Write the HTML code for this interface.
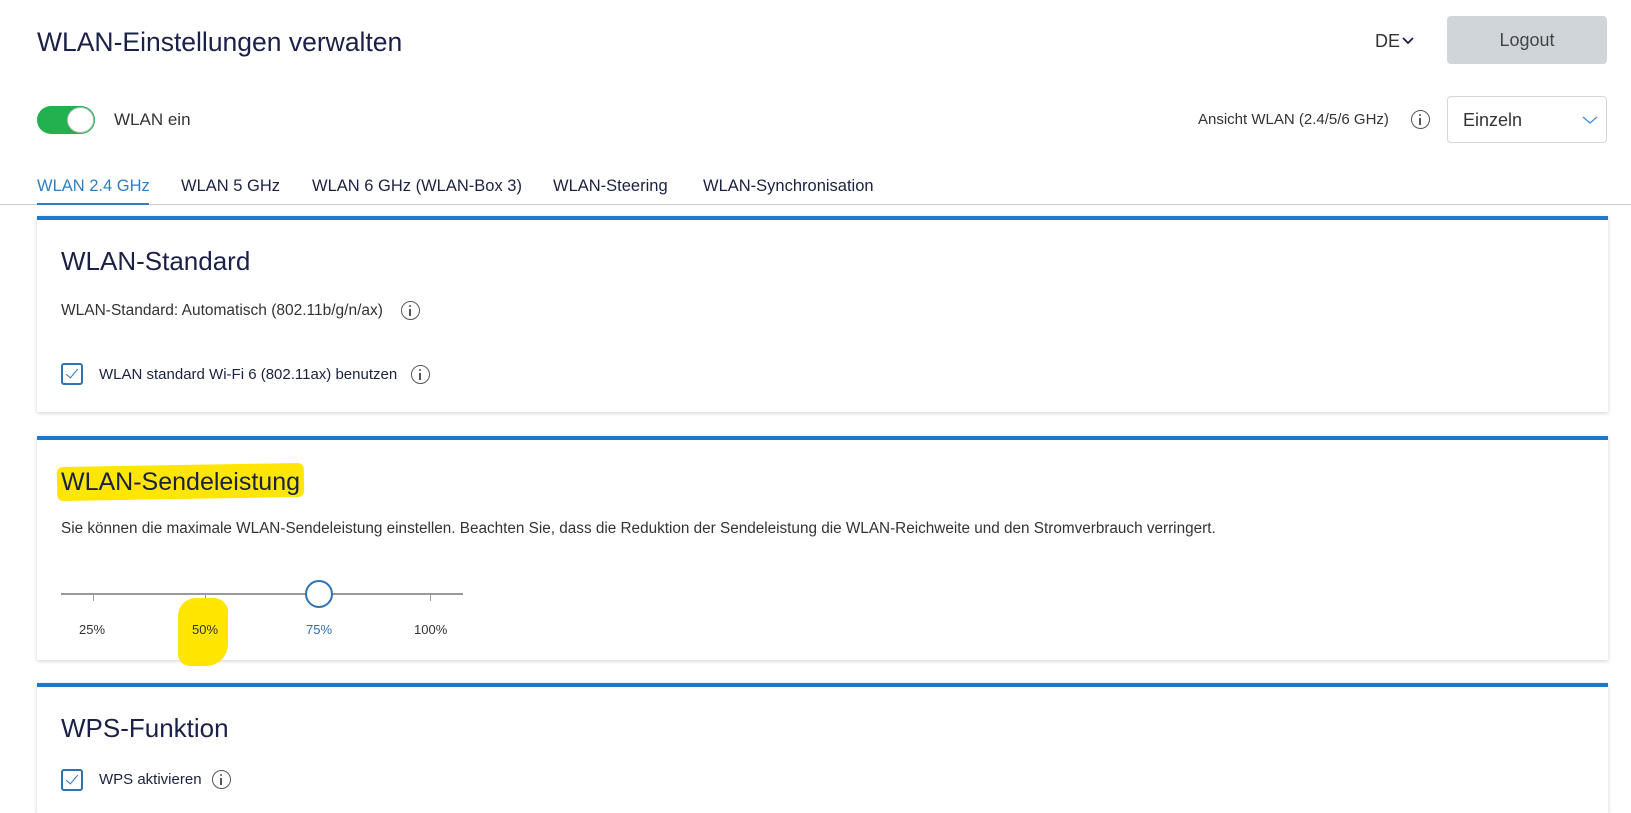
<!DOCTYPE html>
<html><head><meta charset="utf-8"><style>
*{margin:0;padding:0;box-sizing:border-box}
body{width:1631px;height:793px;overflow:hidden;background:#fff;font-family:"Liberation Sans",sans-serif;color:#1b2140;position:relative}
.a{position:absolute;white-space:nowrap}
.card{position:absolute;left:37px;width:1571px;background:#fff;border-top:4px solid #1f77c9;box-shadow:0 1px 4px rgba(0,0,0,.18)}
.info{position:absolute;width:19px;height:19px;border:1.6px solid #555;border-radius:50%}
.info:before{content:"";position:absolute;left:7px;top:3px;width:2.4px;height:2.4px;background:#555;border-radius:50%}
.info:after{content:"";position:absolute;left:7.2px;top:7px;width:2px;height:7px;background:#555}
.cb{position:absolute;width:22px;height:22px;border:2px solid #2f72b5;border-radius:3px}
.cb:after{content:"";position:absolute;left:6px;top:1px;width:5px;height:11px;border:solid #2f72b5;border-width:0 1.5px 1.5px 0;transform:rotate(40deg)}
.tick{position:absolute;top:594px;width:1px;height:7px;background:#999}
</style></head><body>
<div class="a" style="left:37px;top:27px;font-size:26.5px;color:#1a2048">WLAN-Einstellungen verwalten</div>
<div class="a" style="left:1375px;top:31px;font-size:18px;color:#333">DE</div>
<svg class="a" style="left:1402px;top:36px" width="12" height="9"><path d="M1 2l5 5 5-5" fill="none" stroke="#1a2048" stroke-width="1.8"/></svg>
<div class="a" style="left:1447px;top:16px;width:160px;height:48px;background:#d0d5da;border-radius:4px;text-align:center;line-height:48px;font-size:18px;color:#444">Logout</div>

<div class="a" style="left:37px;top:106px;width:58px;height:28px;background:#23b04e;border-radius:14px"></div>
<div class="a" style="left:67px;top:107px;width:27px;height:26px;background:#fff;border-radius:50%;border:1.5px solid #bbb"></div>
<div class="a" style="left:114px;top:110px;font-size:17px;color:#333">WLAN ein</div>

<div class="a" style="left:1198px;top:111px;font-size:15px;color:#333">Ansicht WLAN (2.4/5/6 GHz)</div>
<div class="info" style="left:1411px;top:110px"></div>
<div class="a" style="left:1447px;top:96px;width:160px;height:47px;border:1px solid #d6d6d6;border-radius:4px"></div>
<div class="a" style="left:1463px;top:110px;font-size:18px;color:#333">Einzeln</div>
<svg class="a" style="left:1582px;top:116px" width="16" height="9"><path d="M1 1l7 6 7-6" fill="none" stroke="#3b8fd6" stroke-width="1.3"/></svg>

<div class="a" style="left:0;top:204px;width:1631px;height:1px;background:#ccc"></div>
<div class="a" style="left:37px;top:177px;font-size:16.5px;color:#2f7ec4">WLAN 2.4 GHz</div>
<div class="a" style="left:37px;top:203px;width:112px;height:2px;background:#2f7ec4"></div>
<div class="a" style="left:181px;top:177px;font-size:16.5px">WLAN 5 GHz</div>
<div class="a" style="left:312px;top:177px;font-size:16.5px">WLAN 6 GHz (WLAN-Box 3)</div>
<div class="a" style="left:553px;top:177px;font-size:16.5px">WLAN-Steering</div>
<div class="a" style="left:703px;top:177px;font-size:16.5px">WLAN-Synchronisation</div>

<div class="card" style="top:216px;height:196px"></div>
<div class="a" style="left:61px;top:246px;font-size:26px;color:#1a2048">WLAN-Standard</div>
<div class="a" style="left:61px;top:302px;font-size:15.5px;color:#333">WLAN-Standard: Automatisch (802.11b/g/n/ax)</div>
<div class="info" style="left:401px;top:301px"></div>
<div class="cb" style="left:61px;top:363px"></div>
<div class="a" style="left:99px;top:366px;font-size:15px">WLAN standard Wi-Fi 6 (802.11ax) benutzen</div>
<div class="info" style="left:411px;top:365px"></div>

<div class="card" style="top:436px;height:224px"></div>
<div class="a" style="left:57px;top:465px;width:247px;height:34px;background:#ffe600;border-radius:6px;transform:rotate(-1deg)"></div>
<div class="a" style="left:61px;top:468px;font-size:25px;color:#1a2048">WLAN-Sendeleistung</div>
<div class="a" style="left:61px;top:520px;font-size:15.3px;color:#333">Sie können die maximale WLAN-Sendeleistung einstellen. Beachten Sie, dass die Reduktion der Sendeleistung die WLAN-Reichweite und den Stromverbrauch verringert.</div>
<div class="a" style="left:61px;top:593px;width:402px;height:2px;background:#999"></div>
<div class="tick" style="left:93px"></div><div class="tick" style="left:205px"></div><div class="tick" style="left:430px"></div>
<div class="a" style="left:178px;top:598px;width:50px;height:68px;background:#ffe600;border-radius:18px 14px 22px 12px"></div>
<div class="a" style="left:305px;top:580px;width:28px;height:28px;border:2.5px solid #2f72b5;border-radius:50%;background:#fff"></div>
<div class="a" style="left:79px;top:622px;font-size:13px;color:#333">25%</div>
<div class="a" style="left:192px;top:622px;font-size:13px;color:#333">50%</div>
<div class="a" style="left:306px;top:622px;font-size:13px;color:#2f6fb0">75%</div>
<div class="a" style="left:414px;top:622px;font-size:13px;color:#333">100%</div>

<div class="card" style="top:683px;height:130px"></div>
<div class="a" style="left:61px;top:713px;font-size:26px;color:#1a2048">WPS-Funktion</div>
<div class="cb" style="left:61px;top:769px"></div>
<div class="a" style="left:99px;top:771px;font-size:15px">WPS aktivieren</div>
<div class="info" style="left:212px;top:770px"></div>
</body></html>
